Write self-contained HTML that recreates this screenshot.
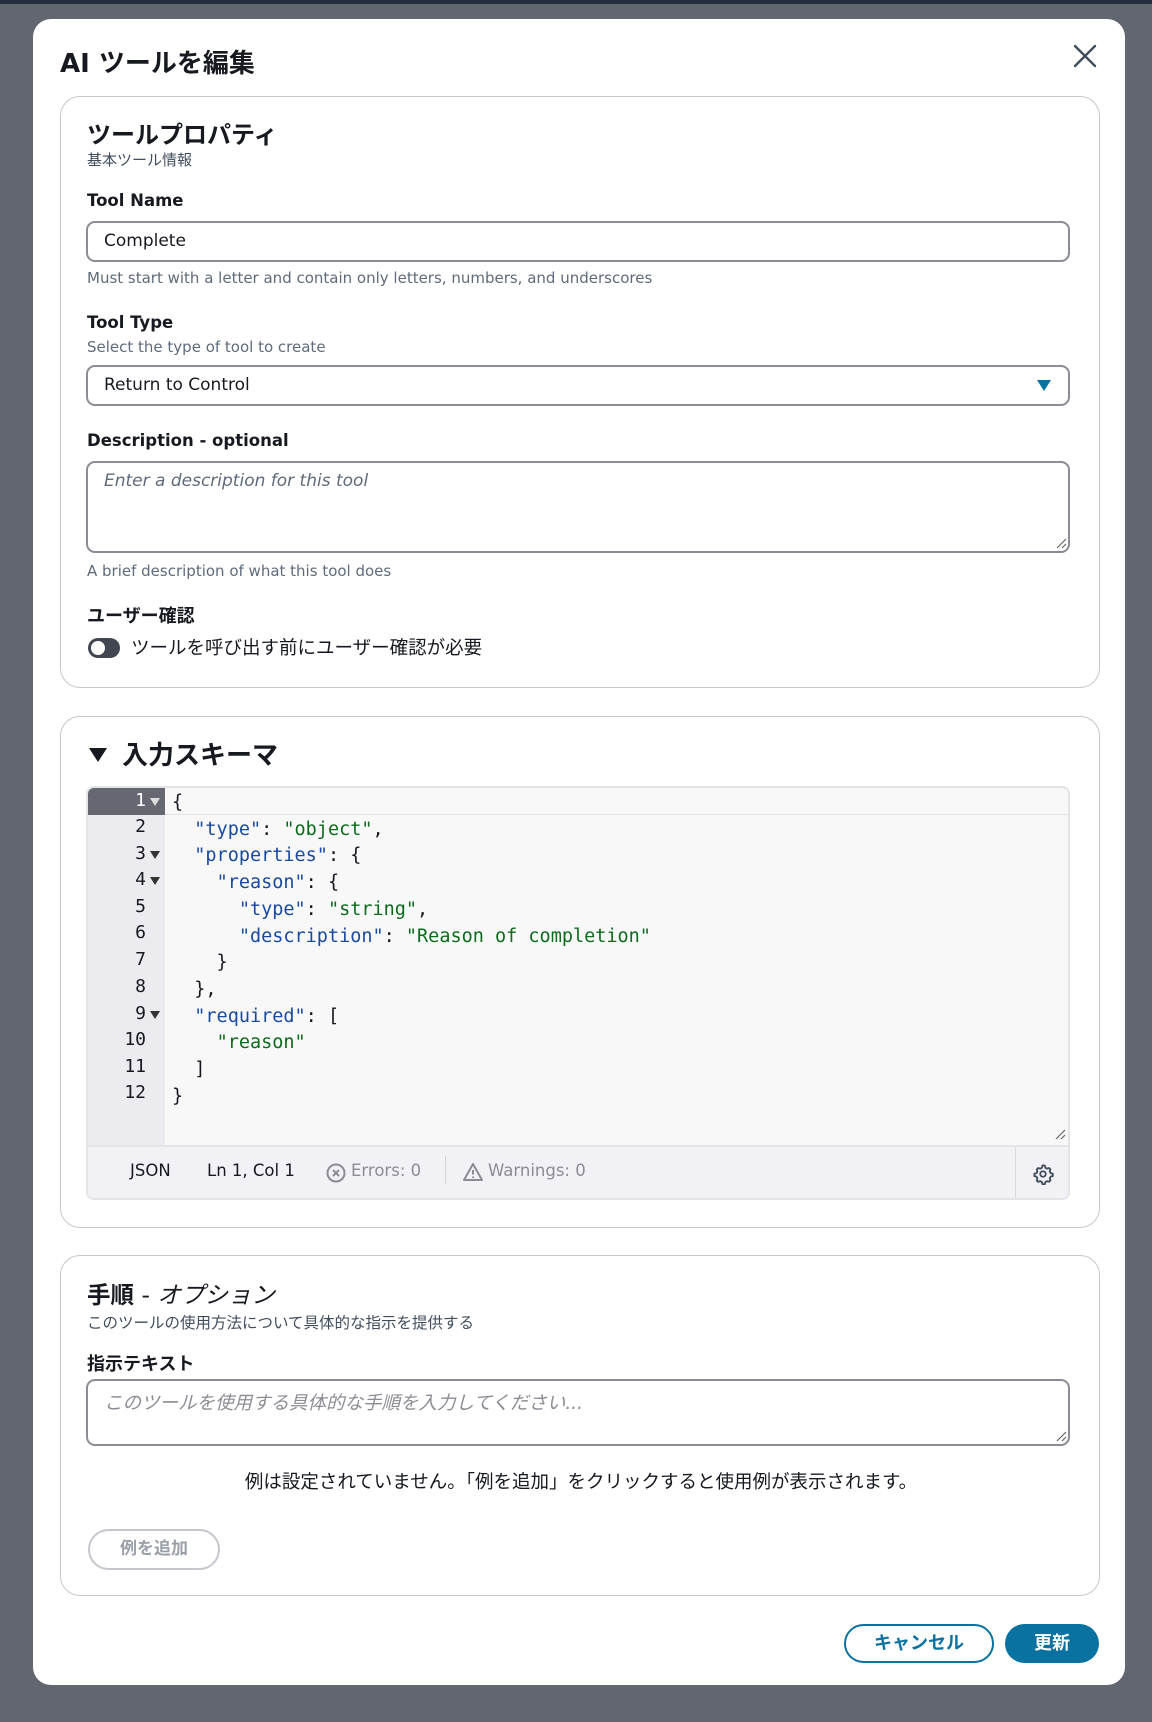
<!DOCTYPE html>
<html><head><meta charset="utf-8"><style>
*{box-sizing:border-box;margin:0;padding:0}
body{width:1152px;height:1722px;background:#62666f;font-family:"DejaVu Sans","Noto Sans CJK JP",sans-serif;color:#16191f;position:relative;overflow:hidden}
.top{position:absolute;left:0;top:0;width:1152px;height:4px;background:#232f3e}
.modal{position:absolute;left:33px;top:19px;width:1092px;height:1666px;background:#fff;border-radius:18px}
.abs{position:absolute}
.card{position:absolute;left:27px;width:1040px;border:1px solid #c6c6cd;border-radius:20px;background:#fff}
.lbl{font-weight:bold;font-size:16.5px}
.help{font-size:15px;color:#5f6b7a}
.inp{position:absolute;left:25px;width:984px;height:41px;border:2px solid #8c8c94;border-radius:9px;font-size:17px;padding:8px 16px}
.ln{position:absolute;left:0;width:77px;text-align:right;padding-right:19px;font-family:"DejaVu Sans Mono",monospace;font-size:18px;color:#16191f}
.code{position:absolute;left:84px;white-space:pre;font-family:"DejaVu Sans Mono",monospace;font-size:18.5px;color:#16191f}
.k{color:#1a4aa0}.s{color:#0c6b1d}
.fold{position:absolute;left:62px;width:0;height:0;border-left:5px solid transparent;border-right:5px solid transparent;border-top:8px solid #333}
</style></head><body>
<div class="top"></div>
<div class="modal">
  <div class="abs" style="left:27px;top:24px;font-size:26px;font-weight:bold">AI ツールを編集</div>
  <svg class="abs" style="left:1040px;top:25px" width="24" height="24" viewBox="0 0 24 24"><path d="M2 2L22 22M22 2L2 22" stroke="#414d5c" stroke-width="2.4" stroke-linecap="round"/></svg>

  <div class="card" style="top:77px;height:592px">
    <div class="abs" style="left:26px;top:18px;font-size:24px;font-weight:bold">ツールプロパティ</div>
    <div class="abs" style="left:26px;top:52px;font-size:15px;color:#414d5c">基本ツール情報</div>
    <div class="abs lbl" style="left:26px;top:94px">Tool Name</div>
    <div class="inp" style="top:124px">Complete</div>
    <div class="abs help" style="left:26px;top:172px">Must start with a letter and contain only letters, numbers, and underscores</div>
    <div class="abs lbl" style="left:26px;top:216px">Tool Type</div>
    <div class="abs help" style="left:26px;top:241px">Select the type of tool to create</div>
    <div class="inp" style="top:268px">Return to Control</div>
    <div class="abs" style="left:976px;top:283px;width:0;height:0;border-left:7px solid transparent;border-right:7px solid transparent;border-top:11px solid #0972a0"></div>
    <div class="abs lbl" style="left:26px;top:334px">Description - optional</div>
    <div class="inp" style="top:364px;height:92px;font-style:italic;color:#5f6b7a">Enter a description for this tool</div>
    <svg class="abs" style="left:994px;top:440px" width="12" height="12"><path d="M2 11L11 2M7 11L11 7" stroke="#666" stroke-width="1.2"/></svg>
    <div class="abs help" style="left:26px;top:465px">A brief description of what this tool does</div>
    <div class="abs lbl" style="left:26px;top:505px;font-size:18px">ユーザー確認</div>
    <div class="abs" style="left:27px;top:541px;width:32px;height:20px;border-radius:10px;background:#424650"></div>
    <div class="abs" style="left:30px;top:544px;width:14px;height:14px;border-radius:7px;background:#fff"></div>
    <div class="abs" style="left:70px;top:537px;font-size:18.5px">ツールを呼び出す前にユーザー確認が必要</div>
  </div>

  <div class="card" style="top:697px;height:512px">
    <div class="abs" style="left:28px;top:31px;width:0;height:0;border-left:9px solid transparent;border-right:9px solid transparent;border-top:14px solid #16191f"></div>
    <div class="abs" style="left:61px;top:18px;font-size:26px;font-weight:bold">入力スキーマ</div>
    <div class="abs" style="left:25px;top:69px;width:984px;height:414px;border:2px solid #e3e3e8;border-radius:8px;background:#f8f8f8;overflow:hidden">
      <div class="abs" style="left:0;top:0;width:77px;height:357px;background:#ebebf0"></div>
      <div class="abs" style="left:0;top:0;width:77px;height:27px;background:#656871"></div>
      <div class="abs" style="left:77px;top:0;right:0;height:27px;border-bottom:1px solid #e3e3e8"></div>
      <div class="ln" style="top:2px;color:#fff">1</div><div class="fold" style="top:10px;border-top-color:#ddd"></div>
      <div class="ln" style="top:28px">2</div>
      <div class="ln" style="top:55px">3</div><div class="fold" style="top:63px"></div>
      <div class="ln" style="top:81px">4</div><div class="fold" style="top:89px"></div>
      <div class="ln" style="top:108px">5</div>
      <div class="ln" style="top:134px">6</div>
      <div class="ln" style="top:161px">7</div>
      <div class="ln" style="top:188px">8</div>
      <div class="ln" style="top:215px">9</div><div class="fold" style="top:223px"></div>
      <div class="ln" style="top:241px">10</div>
      <div class="ln" style="top:268px">11</div>
      <div class="ln" style="top:294px">12</div>
      <div class="code" style="top:2px;line-height:26.7px">{
  <span class="k">"type"</span>: <span class="s">"object"</span>,
  <span class="k">"properties"</span>: {
    <span class="k">"reason"</span>: {
      <span class="k">"type"</span>: <span class="s">"string"</span>,
      <span class="k">"description"</span>: <span class="s">"Reason of completion"</span>
    }
  },
  <span class="k">"required"</span>: [
    <span class="s">"reason"</span>
  ]
}</div>
      <svg class="abs" style="left:966px;top:340px" width="12" height="12"><path d="M2 11L11 2M7 11L11 7" stroke="#666" stroke-width="1.2"/></svg>
      <div class="abs" style="left:0;top:357px;width:984px;height:57px;background:#f2f2f6;border-top:2px solid #e3e3e8"></div>
      <div class="abs" style="left:42px;top:373px;font-size:16.5px">JSON</div>
      <div class="abs" style="left:119px;top:373px;font-size:16.5px">Ln 1, Col 1</div>
      <svg class="abs" style="left:238px;top:375px" width="20" height="20"><circle cx="10" cy="10" r="8.5" fill="none" stroke="#8c8c94" stroke-width="2"/><path d="M7 7L13 13M13 7L7 13" stroke="#8c8c94" stroke-width="2"/></svg>
      <div class="abs" style="left:263px;top:373px;font-size:16.5px;color:#8c8c94">Errors: 0</div>
      <div class="abs" style="left:357px;top:368px;width:1px;height:28px;background:#d1d1d6"></div>
      <svg class="abs" style="left:374px;top:374px" width="22" height="20"><path d="M11 2L20 18H2Z" fill="none" stroke="#8c8c94" stroke-width="2" stroke-linejoin="round"/><path d="M11 8V12.5M11 14.5V16" stroke="#8c8c94" stroke-width="2"/></svg>
      <div class="abs" style="left:400px;top:373px;font-size:16.5px;color:#8c8c94">Warnings: 0</div>
      <div class="abs" style="left:927px;top:359px;width:1px;height:55px;background:#d9d9de"></div>
      <svg class="abs" style="left:944px;top:375px" width="22" height="22" viewBox="0 0 24 24"><path d="M12 2.5l2 .4.6 2.3 1.8 1 2.3-.7 1.4 1.5-.7 2.3 1 1.8 2.3.6v2.6l-2.3.6-1 1.8.7 2.3-1.4 1.5-2.3-.7-1.8 1-.6 2.3h-2.6l-.6-2.3-1.8-1-2.3.7-1.5-1.5.7-2.3-1-1.8-2.3-.6v-2.6l2.3-.6 1-1.8-.7-2.3 1.5-1.5 2.3.7 1.8-1 .6-2.3z" fill="none" stroke="#414d5c" stroke-width="2" stroke-linejoin="round"/><circle cx="12" cy="12" r="3" fill="none" stroke="#414d5c" stroke-width="2"/></svg>
    </div>
  </div>

  <div class="card" style="top:1236px;height:341px">
    <div class="abs" style="left:26px;top:20px;font-size:23.5px"><b>手順</b> - <i>オプション</i></div>
    <div class="abs" style="left:26px;top:55px;font-size:15.5px;color:#414d5c">このツールの使用方法について具体的な指示を提供する</div>
    <div class="abs lbl" style="left:26px;top:94px;font-size:18px">指示テキスト</div>
    <div class="inp" style="top:123px;height:67px;font-style:italic;color:#8c8c94;font-size:18.5px">このツールを使用する具体的な手順を入力してください...</div>
    <svg class="abs" style="left:994px;top:174px" width="12" height="12"><path d="M2 11L11 2M7 11L11 7" stroke="#666" stroke-width="1.2"/></svg>
    <div class="abs" style="left:0;width:1040px;top:212px;text-align:center;font-size:18.5px;color:#16191f">例は設定されていません。「例を追加」をクリックすると使用例が表示されます。</div>
    <div class="abs" style="left:27px;top:273px;width:132px;height:41px;border:2px solid #c6c6cd;border-radius:21px;text-align:center;line-height:37px;font-size:17px;font-weight:bold;color:#9ba0a8">例を追加</div>
  </div>

  <div class="abs" style="left:811px;top:1605px;width:150px;height:39px;border:2px solid #0972a0;border-radius:20px;text-align:center;line-height:35px;font-size:18px;font-weight:bold;color:#0972a0">キャンセル</div>
  <div class="abs" style="left:972px;top:1605px;width:94px;height:39px;background:#0972a0;border-radius:20px;text-align:center;line-height:39px;font-size:18px;font-weight:bold;color:#fff">更新</div>
</div>
</body></html>
